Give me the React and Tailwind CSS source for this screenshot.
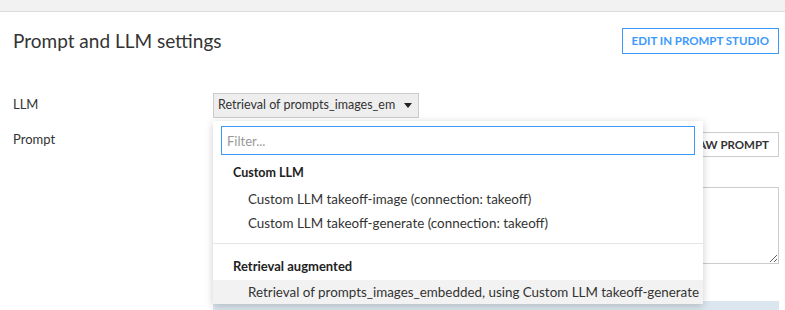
import React from 'react';

const font = { fontFamily: 'Lato, "Open Sans", sans-serif' };

const Option = ({ children, active }) => (
    <div className={`h-[24px] flex items-center pl-[35px] text-[13.4px] whitespace-nowrap text-[#333] ${active ? 'bg-[#f2f2f2]' : ''}`}>
        {children}
    </div>
);

export default function App() {
    return (
        <div className="w-[785px] h-[310px] overflow-hidden bg-white text-[#333]" style={font}>
            <div className="h-[12px] bg-[#f2f2f2] border-b border-[#dddddd]" />

            <div className="relative pl-[13px] pr-[6px]">
                {/* header */}
                <div className="flex items-center justify-between pt-[16px]">
                    <h2 className="text-[19px] leading-[26px] text-[#333]">Prompt and LLM settings</h2>
                    <button className="h-[26px] px-[9px] border border-[#3b99fc] text-[#3b99fc] text-[11.5px] font-bold">
                        EDIT IN PROMPT STUDIO
                    </button>
                </div>

                {/* form */}
                <div className="grid grid-cols-[200px_1fr] mt-[39px] text-[13px]">
                    <div className="pt-[2px]">LLM</div>
                    <div>
                        <div className="w-[206px] h-[25px] flex items-center justify-between bg-[#eeeeee] border border-[#cccccc] pl-[4px] pr-[6px]">
                            <span className="w-[180px] overflow-hidden whitespace-nowrap text-[12.5px]">Retrieval of prompts_images_em</span>
                            <svg width="8" height="5" viewBox="0 0 8 5"><path d="M0 0h8L4 5z" fill="#222" /></svg>
                        </div>
                    </div>

                    <div className="pt-[12px]">Prompt</div>
                    <div className="flex flex-col items-end pt-[14px]">
                        <button className="h-[25px] px-[9px] border border-[#cccccc] bg-white text-[11.5px] font-bold text-[#333]">
                            VIEW RAW PROMPT
                        </button>
                        <textarea className="mt-[30px] w-full h-[77px] border border-[#cccccc] resize-y" />
                    </div>
                </div>
                <div className="ml-[200px] mt-[37px] h-[10px] bg-[#dce6ee]" />

                {/* dropdown */}
                <div className="absolute left-[213px] top-[109px] w-[490px] bg-white shadow-[0_2px_8px_rgba(0,0,0,0.2)]">
                    <div className="px-[8px] pt-[5px]">
                        <input
                            placeholder="Filter..."
                            className="w-full h-[29px] border border-[#3b99fc] px-[5px] text-[13px] outline-none placeholder:text-[#999]"
                        />
                    </div>
                    <div className="h-[28px] flex items-end pl-[20px] text-[12.5px] font-bold text-[#222]">Custom LLM</div>
                    <div className="pt-[4px] pb-[8px]">
                        <Option>Custom LLM takeoff-image (connection: takeoff)</Option>
                        <Option>Custom LLM takeoff-generate (connection: takeoff)</Option>
                    </div>
                    <div className="border-t border-[#e5e5e5]" />
                    <div className="h-[32px] flex items-end pl-[20px] text-[13px] font-bold text-[#222]">Retrieval augmented</div>
                    <div className="pt-[4px]">
                        <Option active>Retrieval of prompts_images_embedded, using Custom LLM takeoff-generate</Option>
                    </div>
                </div>
            </div>
        </div>
    );
}
